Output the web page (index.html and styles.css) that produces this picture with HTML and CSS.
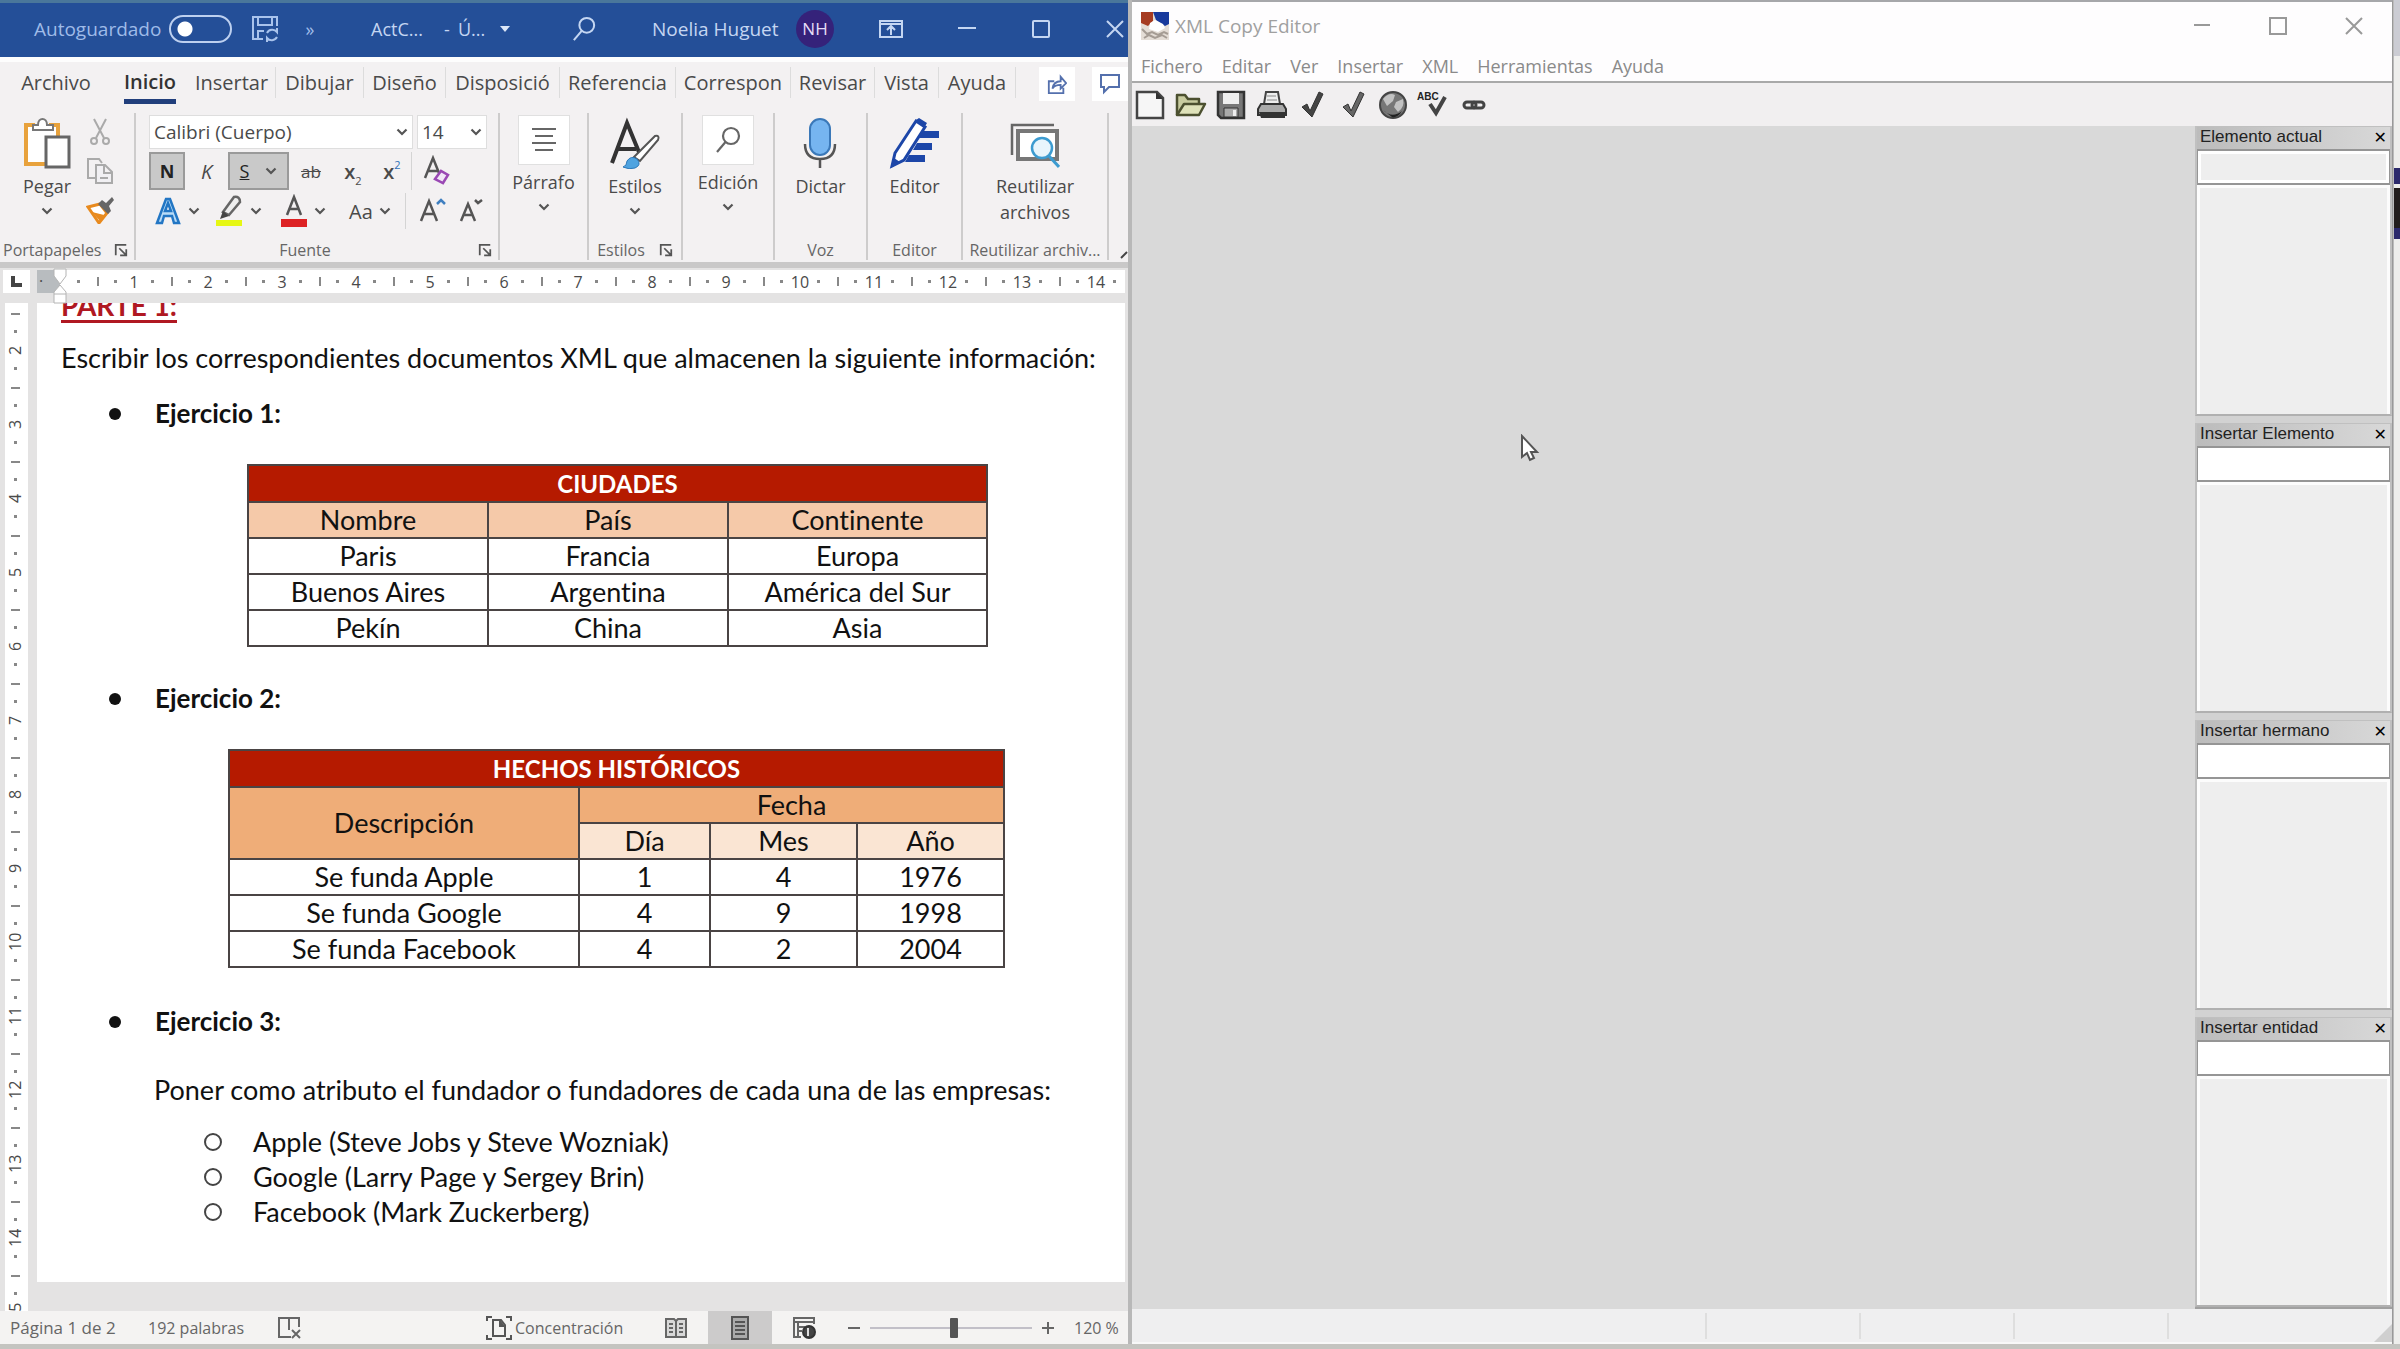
FILE: index.html
```html
<!DOCTYPE html>
<html lang="es">
<head>
<meta charset="utf-8">
<title>Word y XML Copy Editor</title>
<link rel="stylesheet" href="styles.css">
</head>
<body>
<svg class="defs" aria-hidden="true">
  <symbol id="chev" viewBox="0 0 12 8"><path d="M1.5 1.5 6 6l4.500-4.500" fill="none" stroke="#555" stroke-width="2.200"/></symbol>
  <symbol id="launch" viewBox="0 0 16 16"><path d="M2 14V2h12M6 6l7 7M14 7v7H7" fill="none" stroke="#555" stroke-width="2"/></symbol>
  <symbol id="search" viewBox="0 0 26 28"><circle cx="16" cy="10" r="8" fill="none" stroke="currentColor" stroke-width="2.200"/><path d="M10.500 16 2 26" stroke="currentColor" stroke-width="2.200"/></symbol>
</svg>
<div class="desktop">
<section class="word" aria-label="Word">
  <header class="w-title">
    <label class="auto" for="autosave">Autoguardado</label>
    <input class="toggle" type="checkbox" id="autosave">
    <button class="t-save" aria-label="Guardar"><svg width="28" height="28" viewBox="0 0 28 28" fill="none" stroke="#a9c3ec" stroke-width="2"><path d="M26 11V2H2v22h10M7 2v8h14V2M7 24v-8h6M16 18a6 6 0 0 1 10-1v-4M26 22a6 6 0 0 1-10 1v4"/></svg></button>
    <button class="t-more" aria-label="Más">»</button>
    <span class="t-doc">ActC...</span><span class="t-dash">-</span><span class="t-state">Ú...</span>
    <button class="t-down" aria-label="Opciones"><svg width="10" height="6"><path d="M0 0h10L5 6z" fill="#dce7f8"/></svg></button>
    <button class="t-search" aria-label="Buscar"><svg width="24" height="26"><use href="#search"/></svg></button>
    <span class="t-user">Noelia Huguet</span>
    <span class="avatar">NH</span>
    <button class="t-disp" aria-label="Cinta"><svg width="24" height="20" fill="none" stroke="#c4d6f2" stroke-width="2"><path d="M1 2h22v16H1zM1 5h22M12 16V8M8 11l4-4 4 4"/></svg></button>
    <button class="t-ctl" aria-label="Minimizar"><svg width="18" height="18" stroke="#c4d6f2" stroke-width="2"><path d="M0 8h18"/></svg></button>
    <button class="t-ctl" aria-label="Maximizar"><svg width="18" height="18" fill="none" stroke="#c4d6f2" stroke-width="2"><rect x="1" y="1" width="16" height="16" rx="1"/></svg></button>
    <button class="t-ctl" aria-label="Cerrar"><svg width="18" height="18" stroke="#c4d6f2" stroke-width="2"><path d="M1 1l16 16M17 1 1 17"/></svg></button>
  </header>
  <nav class="tabs">
    <button>Archivo</button><button class="on"><span>Inicio</span></button><button>Insertar</button><button>Dibujar</button><button>Diseño</button><button>Disposició</button><button>Referencia</button><button>Correspon</button><button>Revisar</button><button>Vista</button><button>Ayuda</button>
    <div class="tab-actions">
      <button aria-label="Compartir"><svg width="20" height="22" viewBox="0 0 22 24" fill="none" stroke="#5470ad" stroke-width="2"><path d="M8 9H2v13h16v-6M6 17c1-6 4-8 9-8V4l6 7-6 6v-4c-4 0-7 1-9 4z"/></svg></button>
      <button aria-label="Comentarios"><svg width="22" height="22" fill="none" stroke="#5470ad" stroke-width="2"><path d="M2 2h18v12H10l-5 5v-5H2z"/></svg></button>
    </div>
  </nav>
  <div class="ribbon">
    <div class="group">
      <div class="g-body clip">
        <button class="big"><svg width="48" height="52" viewBox="0 0 48 52" fill="none"><path d="M12 8H3v39h20M35 19V8h-9" stroke="#e8a23c" stroke-width="4"/><path d="M5 10h28v9H22v26H5z" fill="#fff"/><path d="M10 13V8h5c0-8 9-8 9 0h6v5z" fill="#fff" stroke="#777" stroke-width="2"/><path d="M23 20h23v30H23z" fill="#fff" stroke="#666" stroke-width="3"/></svg><span>Pegar</span><svg class="chev"><use href="#chev"/></svg></button>
        <div class="stack">
          <button aria-label="Cortar"><svg width="22" height="28" fill="none" stroke="#aaa" stroke-width="2"><path d="M5 1l10 19M17 1 7 20"/><circle cx="5" cy="23" r="3"/><circle cx="17" cy="23" r="3"/></svg></button>
          <button aria-label="Copiar"><svg width="28" height="28" fill="none" stroke="#aaa" stroke-width="2"><path d="M9 21H2V2h11l3 4"/><path d="M10 8h9l7 7v11H10zM18 8v8h8" fill="#f1f0f3"/><path d="M14 21h8"/></svg></button>
          <button aria-label="Copiar formato"><svg width="28" height="28"><path d="M2 11 14 8l7 9-8 10z" fill="#fff" stroke="#e88a1e" stroke-width="3"/><path d="M6 16l8 9 4-6z" fill="#e88a1e"/><path d="M12 8l4-4 4 3 6-6 2 3-5 6 2 5-3 3z" fill="#666"/></svg></button>
        </div>
      </div>
      <div class="g-label"><span>Portapapeles</span><svg class="launch"><use href="#launch"/></svg></div>
    </div>
    <div class="group">
      <div class="g-body font">
        <div class="frow combos">
          <button class="combo face">Calibri (Cuerpo)<svg class="chev"><use href="#chev"/></svg></button>
          <button class="combo size">14<svg class="chev"><use href="#chev"/></svg></button>
        </div>
        <div class="frow r2">
          <button class="sel"><b>N</b></button>
          <button class="it">K</button>
          <button class="sel under"><u>S</u><svg class="chev"><use href="#chev"/></svg></button>
          <button class="strike"><s>ab</s></button>
          <button class="bx">x<span class="low">2</span></button>
          <button class="bx">x<span class="high">2</span></button>
          <button class="edge" aria-label="Borrar formato"><svg width="30" height="32" fill="none"><path d="M3 23 11 3l8 20M6 16h10" stroke="#555" stroke-width="2.500"/><path d="M13 24l6-8 7 4-5 8z" fill="#f1e6f7" stroke="#9a48b4" stroke-width="2.500"/></svg></button>
        </div>
        <div class="frow r3">
          <button aria-label="Efectos de texto"><svg width="28" height="30"><path d="M3 27 12 3h4l9 24h-5l-2-7h-8l-2 7zM11 15h6l-3-8z" fill="#b9dcf7" stroke="#2276c4" stroke-width="2.500"/></svg><svg class="chev"><use href="#chev"/></svg></button>
          <button aria-label="Resaltado"><svg width="30" height="34"><path d="M2 26h26v6H2z" fill="#e6f714"/><path d="M9 18 20 3q6-1 6 5L15 21z" fill="#eee" stroke="#666" stroke-width="2.500"/><path d="M9 17l6 5-9 3z" fill="#444"/></svg><svg class="chev"><use href="#chev"/></svg></button>
          <button aria-label="Color de fuente"><svg width="28" height="34"><path d="M1 25h26v8H1z" fill="#dd2224"/><path d="M7 21 14 3l7 18M9 15h10" fill="none" stroke="#555" stroke-width="2.500"/></svg><svg class="chev"><use href="#chev"/></svg></button>
          <button class="aa">Aa<svg class="chev"><use href="#chev"/></svg></button>
          <button class="edge" aria-label="Agrandar"><svg width="28" height="30" fill="none" stroke-width="2.500"><path d="M2 25 10 5l8 20M5 18h10" stroke="#555"/><path d="M18 8l4-4 4 4" stroke="#3f7fc0"/></svg></button>
          <button aria-label="Reducir"><svg width="26" height="30" fill="none" stroke-width="2.500"><path d="M2 25 9 8l7 17M5 19h8" stroke="#555"/><path d="M16 4l3 3 4-3" stroke="#555"/></svg></button>
        </div>
      </div>
      <div class="g-label mid"><span>Fuente</span><svg class="launch"><use href="#launch"/></svg></div>
    </div>
    <div class="group">
      <div class="g-body"><button class="big"><span class="tile"><svg width="26" height="28" stroke="#666" stroke-width="2"><path d="M1 3h24M4 10h18M1 17h24M4 24h18"/></svg></span><span>Párrafo</span><svg class="chev"><use href="#chev"/></svg></button></div>
    </div>
    <div class="group">
      <div class="g-body"><button class="big"><svg width="52" height="52" fill="none"><path d="M3 46 18 6l14 34M9 32h18" stroke="#333" stroke-width="4"/><path d="M25 40 46 19q5-1 3 4L31 44z" fill="#fff" stroke="#555" stroke-width="2"/><path d="M14 50q4-1 4-6 4-6 10-2 5 6-2 9-6 2-12-1z" fill="#4ea3e0" stroke="#2b78b8"/></svg><span>Estilos</span><svg class="chev"><use href="#chev"/></svg></button></div>
      <div class="g-label mid"><span>Estilos</span><svg class="launch"><use href="#launch"/></svg></div>
    </div>
    <div class="group">
      <div class="g-body"><button class="big"><span class="tile"><svg class="ink" width="26" height="28"><use href="#search"/></svg></span><span>Edición</span><svg class="chev"><use href="#chev"/></svg></button></div>
    </div>
    <div class="group">
      <div class="g-body"><button class="big"><svg width="34" height="52" fill="none"><rect x="7" y="2" width="20" height="36" rx="10" fill="#76b5f0" stroke="#3a78b8" stroke-width="2"/><path d="M2 27q0 15 15 15t15-15M17 42v9" stroke="#555" stroke-width="2.500"/></svg><span>Dictar</span></button></div>
      <div class="g-label mid"><span>Voz</span></div>
    </div>
    <div class="group">
      <div class="g-body"><button class="big"><svg width="52" height="52"><path d="M34 14h16v7H30zM28 26h15v7H24zM20 38h16v7H16z" fill="#1c46a8"/><path d="M3 49 6 36 27 4l9 6-21 33z" fill="#fff" stroke="#1c46a8" stroke-width="3"/><path d="M27 3l3-2 8 5-3 5zM2 51l3-10 6 4z" fill="#1c46a8"/></svg><span>Editor</span></button></div>
      <div class="g-label mid"><span>Editor</span></div>
    </div>
    <div class="group">
      <div class="g-body"><button class="big"><svg width="50" height="52" fill="none"><path d="M2 38V8h42" stroke="#666" stroke-width="2.500"/><path d="M8 14h39v28H8z" fill="#fff" stroke="#777" stroke-width="4"/><circle cx="32" cy="31" r="10" fill="#e8f5fc" stroke="#3c9bd0" stroke-width="2.500"/><path d="M39 39l10 11" stroke="#3c9bd0" stroke-width="3"/></svg><span>Reutilizar<br>archivos</span></button></div>
      <div class="g-label mid"><span>Reutilizar archiv...</span></div>
    </div>
    <div class="group last"><svg width="8" height="10"><path d="M1 8l6-6" fill="none" stroke="#444" stroke-width="2"/></svg></div>
  </div>
  <div class="hruler">
    <span class="tabstop"><svg width="12" height="12"><path d="M2 0v9h9" fill="none" stroke="#444" stroke-width="4"/></svg></span>
    <span class="margin">·</span>
    <ol class="hticks"><li class="half"></li><li>1</li><li>2</li><li>3</li><li>4</li><li>5</li><li>6</li><li>7</li><li>8</li><li>9</li><li>10</li><li>11</li><li>12</li><li>13</li><li>14</li></ol>
    <svg class="indent" width="18" height="36" fill="#fff" stroke="#b4b4b4"><path d="M3 1h12v7l-6 8-6-8zM9 17l6 7v11H3V24zM3 26h12"/></svg>
  </div>
  <div class="work">
    <ol class="vticks"><li class="half"></li><li>2</li><li>3</li><li>4</li><li>5</li><li>6</li><li>7</li><li>8</li><li>9</li><li>10</li><li>11</li><li>12</li><li>13</li><li>14</li><li>15</li></ol>
    <article class="page">
      <h1>PARTE 1:</h1>
      <p class="intro">Escribir los correspondientes documentos XML que almacenen la siguiente información:</p>
      <h2 class="first">Ejercicio 1:</h2>
      <table class="cities">
        <colgroup><col class="c1"><col class="c2"><col class="c3"></colgroup>
        <tr><th class="cap" colspan="3">CIUDADES</th></tr>
        <tr class="peach"><th>Nombre</th><th>País</th><th>Continente</th></tr>
        <tr><td>Paris</td><td>Francia</td><td>Europa</td></tr>
        <tr><td>Buenos Aires</td><td>Argentina</td><td>América del Sur</td></tr>
        <tr><td>Pekín</td><td>China</td><td>Asia</td></tr>
      </table>
      <h2>Ejercicio 2:</h2>
      <table class="facts">
        <colgroup><col class="d1"><col class="d2"><col class="d3"><col class="d4"></colgroup>
        <tr><th class="cap" colspan="4">HECHOS HISTÓRICOS</th></tr>
        <tr class="orange"><th rowspan="2">Descripción</th><th colspan="3">Fecha</th></tr>
        <tr class="cream"><th>Día</th><th>Mes</th><th>Año</th></tr>
        <tr><td>Se funda Apple</td><td>1</td><td>4</td><td>1976</td></tr>
        <tr><td>Se funda Google</td><td>4</td><td>9</td><td>1998</td></tr>
        <tr><td>Se funda Facebook</td><td>4</td><td>2</td><td>2004</td></tr>
      </table>
      <h2 class="third">Ejercicio 3:</h2>
      <p class="task">Poner como atributo el fundador o fundadores de cada una de las empresas:</p>
      <ul class="founders"><li>Apple (Steve Jobs y Steve Wozniak)</li><li>Google (Larry Page y Sergey Brin)</li><li>Facebook (Mark Zuckerberg)</li></ul>
    </article>
  </div>
  <footer class="w-status">
    <span class="s-page">Página 1 de 2</span>
    <span class="s-words">192 palabras</span>
    <svg class="s-proof" width="26" height="26" fill="none" stroke="#666" stroke-width="2"><path d="M14 22H2V3h20v9M12 3v12M15 15l8 8M23 15l-8 8"/></svg>
    <button class="s-focus"><svg width="26" height="26" fill="none" stroke="#555" stroke-width="2"><path d="M1 6V2h5M20 2h5v4M1 20v4h5M20 24h5v-4M7 5h8l4 5v11H7z"/><path d="M14 5v6h5" fill="#555"/></svg><span>Concentración</span></button>
    <button class="s-view" aria-label="Lectura"><svg width="24" height="24" fill="#d8d8d8" stroke="#666" stroke-width="2"><path d="M2 3h8l2 2 2-2h8v18H2zM12 5v16M5 8h4M5 12h4M15 8h4M15 12h4M5 16h4M15 16h4"/></svg></button>
    <button class="s-view on" aria-label="Impresión"><svg width="20" height="26" fill="#aaa" stroke="#555" stroke-width="2"><path d="M2 2h16v22H2zM5 7h10M5 11h10M5 15h10M5 19h10" /></svg></button>
    <button class="s-view" aria-label="Web"><svg width="24" height="26" fill="none" stroke="#666" stroke-width="2"><path d="M9 22H2V3h20v6M2 7h20M6 7v14M6 12h7M6 16h4"/><circle cx="17" cy="17" r="6" fill="#444" stroke="#333"/><path d="M16 13v8" stroke="#ddd"/></svg></button>
    <button class="s-zoom" aria-label="Alejar"><svg width="14" height="14" stroke="#666" stroke-width="2"><path d="M1 7h12"/></svg></button>
    <input class="zoom" type="range" min="0" max="100" value="52" aria-label="Zoom">
    <button class="s-zoom" aria-label="Acercar"><svg width="14" height="14" stroke="#666" stroke-width="2"><path d="M1 7h12M7 1v12"/></svg></button>
    <span class="s-pct">120 %</span>
  </footer>
</section>

<section class="xml" aria-label="XML Copy Editor">
  <header class="x-title">
    <svg width="28" height="28"><path d="M0 0h28v28H0z" fill="#e4ddd6"/><path d="M0 0h12v9l-5 5-7-3z" fill="#a63c22"/><path d="M12 0h16v12l-4 2-9-6z" fill="#183a9c"/><path d="M9 11l5-3 8 4 2 4-7 4-9-3z" fill="#fff"/><path d="M1 17l5 5 5-2 6 3 6-3 4 2M3 26l5-3 6 3 7-3 5 3" fill="none" stroke="#a59c94" stroke-width="2"/></svg>
    <span>XML Copy Editor</span>
    <button aria-label="Minimizar"><svg width="18" height="18" stroke="#999" stroke-width="2"><path d="M1 8h16"/></svg></button>
    <button aria-label="Maximizar"><svg width="18" height="18" fill="none" stroke="#999" stroke-width="2"><path d="M1 1h16v16H1z"/></svg></button>
    <button aria-label="Cerrar"><svg width="18" height="18" stroke="#999" stroke-width="2"><path d="M1 1l16 16M17 1 1 17"/></svg></button>
  </header>
  <nav class="menu"><button>Fichero</button><button>Editar</button><button>Ver</button><button>Insertar</button><button>XML</button><button>Herramientas</button><button>Ayuda</button></nav>
  <div class="tools">
    <button aria-label="Nuevo"><svg width="30" height="30"><path d="M2 2h20l6 6v20H2z" fill="#f6f6f6" stroke="#444" stroke-width="2.500"/><path d="M21 2v7h7z" fill="#333"/></svg></button>
    <button aria-label="Abrir"><svg width="32" height="26" stroke="#4c5030" stroke-width="2.500" stroke-linejoin="round"><path d="M2 23V3h8l3 4h11v5" fill="#c9cca0"/><path d="M2 23l7-11h21l-6 11z" fill="#dfe2ba"/></svg></button>
    <button aria-label="Guardar"><svg width="30" height="30"><path d="M2 2h26v26H5l-3-3z" fill="#777" stroke="#333" stroke-width="2.500"/><path d="M7 3h16v11H7z" fill="#eee"/><path d="M8 18h14v9H8z" fill="#aaa" stroke="#333"/><path d="M17 20h3v6h-3z" fill="#eee"/></svg></button>
    <button aria-label="Imprimir"><svg width="32" height="30"><path d="M8 14 10 2h12l2 12z" fill="#eee" stroke="#444" stroke-width="2"/><path d="M11 6h9M11 10h10" stroke="#888"/><path d="M5 14h22l3 5v6H2v-6z" fill="#aaa" stroke="#333" stroke-width="2"/><path d="M3 22h26v6H5z" fill="#333"/></svg></button>
    <button aria-label="Comprobar"><svg width="24" height="28"><path d="M2 16l5-3 3 7L19 1l4 2-11 23z" fill="#444" stroke="#333"/></svg></button>
    <button aria-label="Validar"><svg width="24" height="28"><path d="M2 16l5-3 3 7L19 1l4 2-11 23z" fill="#666" stroke="#333"/></svg></button>
    <button aria-label="Navegador"><svg width="30" height="30"><circle cx="15" cy="15" r="13" fill="#777" stroke="#444" stroke-width="2"/><path d="M5 9q6-7 12-4l-2 6-6 5zM18 12l7-3q2 8-5 13l-4-5z" fill="#c2c2c2"/><path d="M5 20q9 9 19 1-4 7-10 6z" fill="#222"/></svg></button>
    <button class="spell" aria-label="Ortografía"><span>ABC</span><svg width="20" height="22"><path d="M2 8l6 9L17 1" fill="none" stroke="#444" stroke-width="4"/></svg></button>
    <button aria-label="Enlace"><svg width="26" height="14" fill="none" stroke="#444" stroke-width="3"><rect x="3" y="4" width="12" height="6" rx="3"/><rect x="11" y="4" width="12" height="6" rx="3"/></svg></button>
  </div>
  <div class="x-main">
    <div class="canvas"></div>
    <aside class="panels">
      <section><h3><label for="p1">Elemento actual</label><button aria-label="Cerrar">✕</button></h3><input id="p1" class="dim" readonly><div class="list"></div></section>
      <section><h3><label for="p2">Insertar Elemento</label><button aria-label="Cerrar">✕</button></h3><input id="p2"><div class="list"></div></section>
      <section><h3><label for="p3">Insertar hermano</label><button aria-label="Cerrar">✕</button></h3><input id="p3"><div class="list"></div></section>
      <section><h3><label for="p4">Insertar entidad</label><button aria-label="Cerrar">✕</button></h3><input id="p4"><div class="list"></div></section>
    </aside>
  </div>
  <footer class="x-status"><span></span><span></span><span></span><span></span><span class="rest"></span><svg width="18" height="18"><path d="M18 0v18H0z" fill="#cfcfcf"/></svg></footer>
</section>
<div class="behind"><i class="b1"></i><i class="b2"></i><i class="b3"></i></div>
</div>
<svg class="cursor" width="20" height="28"><path d="M2 2v21l5-4 3 7 4-2-3-6h6z" fill="#fff" stroke="#555" stroke-width="2"/></svg>
</body>
</html>
```
FILE: styles.css
```css
* { box-sizing: border-box; }
body { margin: 0; font-family: "Open Sans", "Noto Sans", sans-serif; color: #4a4a4a; background: #c4c4c0; overflow: hidden; }
button { font: inherit; color: inherit; background: none; border: 0; padding: 0; margin: 0; display: flex; align-items: center; justify-content: center; white-space: nowrap; }
input { margin: 0; }
ol, ul { list-style: none; margin: 0; padding: 0; }
svg { display: block; flex: none; }
.defs { position: absolute; width: 0; height: 0; }
.chev { width: 12px; height: 8px; }
.launch { width: 14px; height: 14px; }

.desktop { display: grid; grid-template-columns: 1132fr 1261fr 7px; height: 100vh; padding-bottom: 5px; }
.word, .xml { display: flex; flex-direction: column; min-width: 0; min-height: 0; overflow: hidden; }
.word { background: #e4e3e3; border-right: 4px solid #b8b8b8; }

/* Word title bar */
.w-title { flex: none; display: flex; align-items: center; height: 57px; padding: 0 0 2px 34px; border-top: 3px solid #4a779b; background: #244f98; color: #c4d6f2; font-size: 18px; white-space: nowrap; }
.auto { width: 135px; color: #9fbbe8; font-size: 19px; }
.toggle { appearance: none; width: 63px; height: 28px; border: 2px solid #bdd0f0; border-radius: 14px; background: radial-gradient(circle at 14px 12px, #fff 7px, transparent 8px); }
.t-save { margin-left: 19px; }
.t-more { margin-left: 23px; width: 16px; color: #9fbbe8; }
.t-doc { margin-left: 53px; width: 73px; }
.t-dash { width: 14px; }
.t-state { width: 42px; }
.t-search { margin-left: 62px; }
.t-user { margin-left: 56px; width: 128px; font-size: 19px; }
.avatar { margin-left: 16px; width: 38px; height: 38px; border-radius: 50%; background: #35227a; color: #e6dcf6; font-size: 17px; line-height: 38px; text-align: center; }
.t-disp { margin-left: 45px; }
.t-ctl { margin-left: 55px; }
.t-ctl + .t-ctl { margin-left: 56px; }

/* Ribbon tabs */
.tabs { flex: none; display: grid; grid-template-columns: 112px 76px 88px 88px 82px 114px 116px 115px 84px 64px 77px 1fr; height: 49px; padding-top: 5px; border-top: 5px solid #fdfdfd; background: #f3f1f2; font-size: 20px; }
.tabs > button { height: 31px; border-right: 1px solid #dcdcdc; overflow: hidden; }
.tabs > button:first-child { border: 0; }
.tabs > .on { height: 37px; font-weight: 600; border: 0; align-items: flex-start; color: #333; overflow: visible; }
.on span { height: 37px; line-height: 30px; border-bottom: 5px solid #213f7c; }
.tab-actions { display: flex; justify-content: space-between; padding-left: 23px; }
.tab-actions button { width: 36px; height: 34px; background: #fff; }

/* Ribbon */
.ribbon { flex: none; display: grid; grid-template-columns: 136px 364px 89px 94px 92px 93px 95px 146px 1fr; height: 162px; padding: 7px 0 2px; border-bottom: 6px solid #c9c8c8; background: #f3f1f2; font-size: 18px; }
.group { display: flex; flex-direction: column; border-right: 2px solid #cdcccc; min-width: 0; }
.group.last { border: 0; justify-content: flex-end; align-items: flex-end; }
.g-body { flex: 1; display: flex; justify-content: center; min-height: 0; }
.g-label { display: flex; align-items: center; justify-content: space-between; height: 20px; padding: 0 6px 0 3px; font-size: 16px; line-height: 20px; white-space: nowrap; color: #666; }
.g-label.mid { justify-content: center; gap: 14px; padding: 0; }
.font + .g-label.mid { display: grid; grid-template-columns: 1fr 20px; padding-left: 10px; text-align: center; }
.big { flex-direction: column; justify-content: flex-start; padding-top: 4px; line-height: 26px; }
.big .chev { margin-top: 8px; }
.big > span:not(.tile) { margin-top: 4px; }
.tile { display: flex; align-items: center; justify-content: center; width: 52px; height: 50px; background: #fff; border: 1px solid #e0e0e0; margin-top: -2px; }
.ink { color: #666; }
.clip { justify-content: flex-start; padding-left: 23px; gap: 15px; }
.stack { display: flex; flex-direction: column; gap: 11px; padding-top: 5px; align-items: center; }
.font { flex-direction: column; justify-content: flex-start; padding: 2px 0 0 13px; gap: 3px; }
.frow { display: grid; }
.combos { grid-template-columns: 264px 70px; gap: 4px; height: 34px; }
.combo { background: #fff; border: 1px solid #dedede; justify-content: space-between; padding: 0 4px 0 4px; font-size: 19px; }
.r2 { grid-template-columns: 36px 43px 61px 44px 40px 38px 50px; height: 38px; }
.r3 { grid-template-columns: 56px 66px 64px 70px 54px 26px; height: 36px; }
.r3 button { gap: 6px; }
.sel { background: #c9c9c9; border: 2px solid #9a9a9a; color: #222; }
.under { gap: 16px; }
.it { font-style: italic; font-size: 20px; }
.strike { font-size: 17px; }
.bx { font-weight: 600; font-size: 20px; }
.bx span { font-size: 11px; font-weight: 400; line-height: 11px; height: 24px; }
.bx .low { padding-top: 16px; }
.bx .high { color: #2f70b8; }
.edge { border-left: 1px solid #d4d4d4; }
.aa { font-size: 20px; }

/* Rulers */
.hruler { flex: none; position: relative; display: flex; height: 35px; padding: 2px 3px 10px; }
.tabstop { width: 27px; background: #fff; display: flex; align-items: center; justify-content: center; }
.margin { width: 23px; margin-left: 7px; background: #b8bcbf; line-height: 22px; padding-left: 2px; }
.hticks { flex: 1; display: flex; overflow: hidden; background: #fff; font-size: 16px; line-height: 24px; }
.hticks li { flex: none; width: 74px; text-align: center; background: linear-gradient(#888, #888) 0 center / 2px 9px no-repeat, linear-gradient(#888, #888) 17px center / 3px 3px no-repeat, linear-gradient(#888, #888) 54px center / 3px 3px no-repeat; }
.hticks .half { width: 37px; background: linear-gradient(#888, #888) 17px center / 3px 3px no-repeat; }
.indent { position: absolute; left: 51px; top: 0; }
.work { flex: 1; min-height: 0; display: flex; padding: 0 3px 0 5px; overflow: hidden; }
.vticks { flex: none; width: 23px; margin-right: 9px; background: #fff; font-size: 16px; overflow: hidden; }
.vticks li { height: 74px; writing-mode: vertical-rl; transform: rotate(180deg); text-align: center; line-height: 21px; background: linear-gradient(#888, #888) center 100% / 9px 2px no-repeat, linear-gradient(#888, #888) center 17px / 3px 3px no-repeat, linear-gradient(#888, #888) center 54px / 3px 3px no-repeat; }
.vticks .half { height: 10px; background: none; }

/* Document */
.page { flex: 1; min-width: 0; align-self: flex-start; height: calc(100% - 29px); overflow: hidden; background: #fff; color: #111; font: 27px/36px Lato, "Open Sans", sans-serif; font-variant-ligatures: none; padding: 0 24px; }
.page p, .page h1, .page h2 { margin: 0; white-space: nowrap; }
.page h1 { font-size: 28px; line-height: 36px; margin-top: -16px; color: #b01822; text-decoration: underline; text-decoration-thickness: 3px; text-underline-offset: 4px; }
.page .intro { margin-top: 17px; }
.page h2 { position: relative; font-size: 26px; line-height: 36px; margin-top: 33px; padding-left: 94px; }
.page .first { margin-top: 19px; }
.page .third { margin-top: 35px; }
.page h2::before { content: ""; position: absolute; left: 48px; top: 13px; width: 12px; height: 12px; border-radius: 50%; background: #111; }
.page table { border-collapse: collapse; table-layout: fixed; margin-top: 33px; text-align: center; font-size: 27px; line-height: 34px; }
.cities { width: 741px; margin-left: 186px; }
.facts { width: 777px; margin-left: 167px; }
th, td { border: 2px solid #4a4444; padding: 0; height: 36px; font-weight: 400; }
.page .cap { background: #b51a00; color: #fff; font-weight: 700; font-size: 24px; height: 37px; }
.peach { background: #f5c9a9; }
.orange { background: #efad78; }
.cream { background: #fae5d3; }
.c1, .c2 { width: 240px; }
.d1 { width: 350px; }
.d2 { width: 131px; }
.d3 { width: 147px; }
.page .task { margin-top: 33px; padding-left: 93px; }
.founders { margin-top: 16px; line-height: 35px; padding-left: 143px; }
.founders li { display: flex; align-items: center; gap: 31px; }
.founders li::before { content: ""; width: 14px; height: 14px; border: 2px solid #444; border-radius: 50%; }

/* Word status bar */
.w-status { flex: none; display: flex; align-items: center; height: 33px; padding-left: 10px; background: #f4f3f2; font-size: 16px; white-space: nowrap; color: #666; }
.s-page { width: 138px; font-size: 17px; }
.s-words { width: 129px; }
.s-focus { margin: 0 20px 0 183px; gap: 3px; width: 138px; justify-content: flex-start; }
.s-view { width: 64px; height: 33px; }
.s-view.on { background: #cccbcb; }
.s-zoom { width: 24px; }
.s-view + .s-zoom { margin-left: 6px; }
.zoom { appearance: none; width: 162px; margin: 0 4px; height: 20px; background: linear-gradient(#c2c0c8, #c2c0c8) center / 100% 2px no-repeat; }
.zoom::-webkit-slider-thumb { appearance: none; width: 8px; height: 20px; background: #555; border-radius: 1px; }
.s-pct { margin-left: 14px; }

/* XML Copy Editor */
.xml { border-top: 2px solid #a6a7aa; border-right: 1px solid #999; background: #fefdfe; }
.x-title { flex: none; display: flex; align-items: center; height: 48px; padding: 0 3px 0 9px; gap: 6px; color: #a0a0a0; font-size: 19px; }
.x-title span { flex: 1; }
.x-title button { width: 70px; }
.menu { flex: none; display: flex; align-items: center; gap: 19px; height: 33px; padding: 0 9px; border-bottom: 2px solid #a9a9a9; font-size: 18px; color: #8a8a8a; }
.tools { flex: none; display: flex; align-items: center; height: 43px; padding-left: 2px; background: #f1eff0; }
.tools button { width: 32px; margin-right: 8px; }
.tools button:nth-child(even) { width: 33px; }
.spell { position: relative; }
.spell svg { margin: 4px 0 0 8px; }
.spell span { position: absolute; left: 0; top: -1px; font: bold 10px "Liberation Sans", sans-serif; color: #222; }
.x-main { flex: 1; min-height: 0; display: flex; background: #d9d9d9; }
.canvas { flex: 1; }
.panels { width: 197px; display: flex; flex-direction: column; gap: 7px; background: #d2d2d2; border-bottom: 2px solid #a0a0a0; }
.panels section { flex: 1; min-height: 0; display: flex; flex-direction: column; background: #eee; border: 2px solid #c0c0c0; border-width: 1px 2px 2px; border-bottom-color: #b0b0b0; }
.panels h3 { flex: none; margin: 0; display: flex; justify-content: space-between; align-items: center; height: 22px; padding: 0 3px 2px; background: linear-gradient(90deg, #bcbcbc, #d8d8d8); font: 17px "Liberation Sans", sans-serif; color: #222; }
.panels h3 button { font: 16px "DejaVu Sans", sans-serif; color: #000; }
.panels input { flex: none; width: 100%; height: 36px; border: 2px solid #959595; border-width: 2px 1px; background: #fff; }
.panels .dim { background: #eee; box-shadow: inset 0 0 0 3px #fff; }
.list { flex: 1; border: solid #fcfcfc; border-width: 3px 3px 0; }
.x-status { flex: none; display: flex; align-items: stretch; height: 35px; background: #efeff0; border-bottom: 2px solid #f8f8f8; padding-top: 4px; }
.x-status span { width: 154px; border-left: 2px solid #dedede; margin-bottom: 3px; }
.x-status span:first-child { flex: 1; border: 0; }
.x-status .rest { width: 207px; }
.x-status svg { align-self: flex-end; }

.behind { display: flex; flex-direction: column; background: linear-gradient(#cbccd3 56px, #eeeeec 56px); border-left: 1px solid #bbb; padding-top: 168px; }
.b1 { height: 16px; background: #2c2a6c; }
.b2 { height: 40px; margin-top: 4px; background: #221d1c; }
.b3 { height: 11px; background: #2c2a6c; }
.cursor { position: absolute; left: 1520px; top: 434px; }
```
